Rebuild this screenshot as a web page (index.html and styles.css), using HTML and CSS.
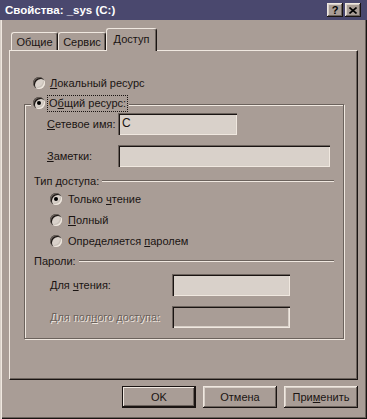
FILE: index.html
```html
<!DOCTYPE html>
<html lang="ru">
<head>
    <meta charset="UTF-8">
    <title>Свойства: _sys (C:)</title>
    <link rel="stylesheet" href="styles.css">
</head>
<body>
    <div class="window">
        <!-- Заголовок окна -->
        <div class="titlebar">
            <span class="title">Свойства: _sys (C:)</span>
            <div class="caption-buttons">
                <span class="cap-btn">?</span>
                <span class="cap-btn">
                    <svg width="8" height="7" viewBox="0 0 8 7">
                        <path d="M0.5 0.5 L7.5 6.5 M7.5 0.5 L0.5 6.5" stroke="#000" stroke-width="1.6" fill="none"/>
                    </svg>
                </span>
            </div>
        </div>

        <div class="content">
            <!-- Вкладки -->
            <div class="tabs">
                <div class="tab">Общие</div>
                <div class="tab">Сервис</div>
                <div class="tab active">Доступ</div>
            </div>

            <div class="panel">
                <div class="radio-row top-radio">
                    <span class="radio"></span>
                    <span><u>Л</u>окальный ресурс</span>
                </div>

                <div class="group">
                    <div class="group-caption">
                        <span class="radio checked"></span>
                        <span class="focus">О<u>б</u>щий ресурс:</span>
                    </div>

                    <div class="field-row first">
                        <span class="label"><u>С</u>етевое имя:</span>
                        <span class="input short">C</span>
                    </div>
                    <div class="field-row">
                        <span class="label"><u>З</u>аметки:</span>
                        <span class="input long"></span>
                    </div>

                    <div class="separator sep-access">
                        <span>Тип доступа:</span>
                        <span class="line"></span>
                    </div>
                    <div class="radio-row inner first">
                        <span class="radio checked"></span>
                        <span>Только <u>ч</u>тение</span>
                    </div>
                    <div class="radio-row inner">
                        <span class="radio"></span>
                        <span><u>П</u>олный</span>
                    </div>
                    <div class="radio-row inner">
                        <span class="radio"></span>
                        <span>Определяется <u>п</u>аролем</span>
                    </div>

                    <div class="separator sep-pass">
                        <span>Пароли:</span>
                        <span class="line"></span>
                    </div>
                    <div class="pass-row first">
                        <span class="label">Для <u>ч</u>тения:</span>
                        <span class="input"></span>
                    </div>
                    <div class="pass-row">
                        <span class="label disabled">Для пол<u>н</u>ого доступа:</span>
                        <span class="input disabled"></span>
                    </div>
                </div>
            </div>

            <!-- Кнопки диалога -->
            <div class="buttons">
                <div class="btn default">OK</div>
                <div class="btn">Отмена</div>
                <div class="btn">При<u>м</u>енить</div>
            </div>
        </div>
    </div>
</body>
</html>
```

FILE: styles.css
```css
/* Общие настройки */
body {
    margin: 0;
    background-color: #a99d96;
    font-family: "Liberation Sans", Arial, sans-serif;
    font-size: 11px;
    color: #1a1412;
}
u {
    text-underline-offset: 1px;
}
/* Окно */
.window {
    width: 367px;
    height: 419px;
    box-sizing: border-box;
    display: flex;
    flex-direction: column;
    background-color: #a99d96;
    box-shadow: inset 1px 0 #d8d0c8, inset 2px 0 #f0e8e0,
                inset -1px -1px #1a1412, inset -2px -2px #6b625c;
}
/* Заголовок */
.titlebar {
    height: 20px;
    flex: none;
    display: flex;
    align-items: center;
    justify-content: space-between;
    padding: 0 6px 0 5px;
    background-color: #4a486e;
}
.title {
    color: #fff;
    font-weight: bold;
    font-size: 11.5px;
}
.caption-buttons {
    display: flex;
    gap: 2px;
}
.cap-btn {
    width: 16px;
    height: 14px;
    box-sizing: border-box;
    display: flex;
    align-items: center;
    justify-content: center;
    background-color: #a99d96;
    font-weight: bold;
    font-size: 11px;
    color: #000;
    box-shadow: inset -1px -1px #1a1412, inset 1px 1px #f0e8e0,
                inset -2px -2px #6b625c, inset 2px 2px #d8d0c8;
}
/* Содержимое */
.content {
    padding: 8px 9px 0 9px;
    display: flex;
    flex-direction: column;
}
/* Вкладки */
.tabs {
    display: flex;
    align-items: flex-end;
    height: 22px;
    padding-left: 2px;
    position: relative;
    z-index: 1;
}
.tab {
    height: 18px;
    box-sizing: border-box;
    display: flex;
    align-items: center;
    justify-content: center;
    border-top: 1px solid #f0e8e0;
    border-left: 1px solid #f0e8e0;
    border-right: 1px solid #1a1412;
    border-radius: 3px 3px 0 0;
    box-shadow: inset -1px 0 #6b625c;
    background-color: #a99d96;
}
.tab:nth-child(1) { width: 47px; }
.tab:nth-child(2) { width: 48px; }
.tab.active {
    width: 51px;
    height: 23px;
    margin-bottom: -1px;
    padding-bottom: 2px;
}
/* Панель вкладки */
.panel {
    height: 330px;
    box-sizing: border-box;
    border-top: 1px solid #f0e8e0;
    border-left: 1px solid #f0e8e0;
    border-right: 1px solid #1a1412;
    border-bottom: 1px solid #1a1412;
    box-shadow: inset -1px -1px #6b625c;
    padding: 24px 13px 0 14px;
}
/* Переключатели */
.radio-row {
    display: flex;
    align-items: center;
    height: 16px;
    gap: 5px;
}
.top-radio {
    margin-left: 9px;
}
.radio {
    width: 12px;
    height: 12px;
    flex: none;
    border-radius: 50%;
    background-color: #d9d1ca;
    position: relative;
    box-shadow: inset 1px 1px #6b625c, inset 2px 2px #1a1412,
                inset -1px -1px #f0e8e0, inset -2px -2px #c8c0b8;
}
.radio.checked::after {
    content: "";
    position: absolute;
    left: 4px;
    top: 4px;
    width: 4px;
    height: 4px;
    border-radius: 50%;
    background-color: #000;
}
/* Группа */
.group {
    margin-top: 13px;
    border: 1px solid #6b625c;
    box-shadow: inset 1px 1px #f0e8e0, 1px 1px #f0e8e0;
    padding-bottom: 10px;
}
.group-caption {
    display: flex;
    align-items: center;
    gap: 3px;
    height: 16px;
    width: fit-content;
    margin: -10px 0 0 6px;
    padding: 0 2px;
    background-color: #a99d96;
}
.focus {
    outline: 1px dotted #1a1412;
    padding: 0 1px;
    line-height: 15px;
}
.label {
    white-space: nowrap;
    flex: none;
}
.field-row,
.pass-row {
    display: flex;
    align-items: center;
    margin-top: 10px;
}
.field-row {
    padding-left: 22px;
}
.field-row.first {
    margin-top: 2px;
}
.field-row .label {
    width: 71px;
}
.pass-row {
    padding-left: 25px;
}
.pass-row.first {
    margin-top: 6px;
}
.pass-row .label {
    width: 122px;
}
.label.disabled {
    color: #6b625c;
    text-shadow: 1px 1px #f0e8e0;
}
/* Поля ввода */
.input {
    width: 118px;
    height: 22px;
    flex: none;
    box-sizing: border-box;
    padding: 3px 4px;
    line-height: 14px;
    font-size: 12px;
    background-color: #d9d1ca;
    box-shadow: inset 1px 1px #6b625c, inset 2px 2px #1a1412,
                inset -1px -1px #f0e8e0, inset -2px -2px #d8d0c8;
}
.input.short { width: 119px; }
.input.long { width: 212px; }
.input.disabled {
    background-color: #a99d96;
}
/* Разделители */
.separator {
    display: flex;
    align-items: center;
    height: 14px;
    padding-left: 9px;
    padding-right: 9px;
}
.sep-access { margin-top: 7px; }
.sep-pass { margin-top: 5px; }
.separator .line {
    flex: 1;
    margin-left: 3px;
    border-top: 1px solid #6b625c;
    border-bottom: 1px solid #f0e8e0;
}
.radio-row.inner {
    padding-left: 25px;
    gap: 6px;
    margin-top: 5px;
}
.radio-row.inner.first {
    margin-top: 3px;
}
/* Кнопки */
.buttons {
    display: flex;
    justify-content: flex-end;
    gap: 7px;
    margin-top: 6px;
}
.btn {
    width: 74px;
    height: 22px;
    box-sizing: border-box;
    display: flex;
    align-items: center;
    justify-content: center;
    background-color: #a99d96;
    box-shadow: inset -1px -1px #1a1412, inset 1px 1px #f0e8e0,
                inset -2px -2px #6b625c, inset 2px 2px #d8d0c8;
}
.btn.default {
    box-shadow: inset 0 0 0 1px #1a1412, inset -2px -2px #1a1412,
                inset 2px 2px #f0e8e0, inset -3px -3px #6b625c;
}
```
